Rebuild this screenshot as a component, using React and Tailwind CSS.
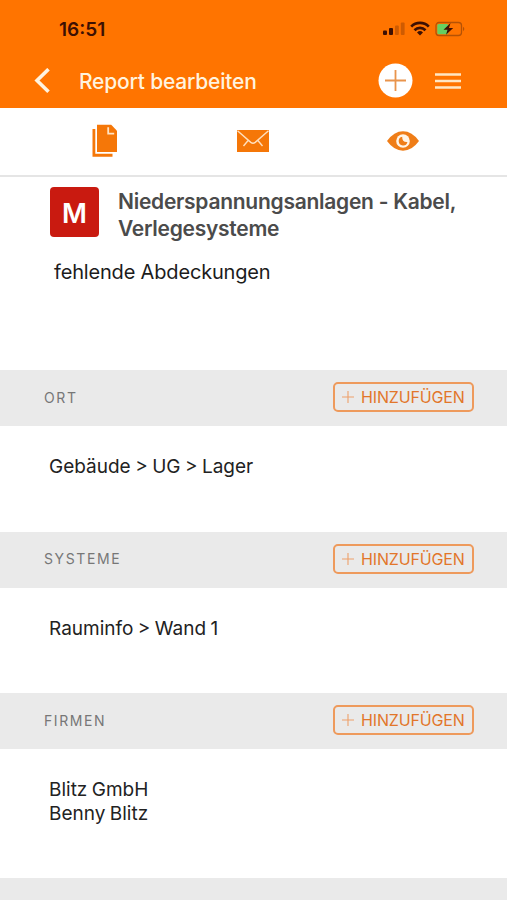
import { useState } from "react";

const sections = [
  { title: "ORT", lines: ["Gebäude > UG > Lager"], height: "h-[105.5px]" },
  { title: "SYSTEME", lines: ["Rauminfo > Wand 1"], height: "h-[105.5px]" },
  { title: "FIRMEN", lines: ["Blitz GmbH", "Benny Blitz"], height: "h-[129px]" },
];

const StatusBar = () => (
  <div className="flex h-[54px] items-start justify-between pt-[17px] pr-[41px] pl-[59px]">
    <span className="pt-[1px] text-[19px] leading-[24px] font-semibold text-[#3d1003]">16:51</span>
    <svg width="84" height="16" viewBox="0 0 84 16" className="mt-[4px]">
      <g fill="#3d1003">
        <rect x="1" y="9.5" width="4" height="4.5" rx="1" />
        <rect x="7" y="7" width="4" height="7" rx="1" />
        <rect x="13" y="4.5" width="3.8" height="9.5" rx="1" opacity=".25" />
        <rect x="18.8" y="1.5" width="3.8" height="12.5" rx="1" opacity=".25" />
      </g>
      <g fill="none" stroke="#3d1003" strokeWidth="2.7">
        <path d="M29.2 5.6a12.4 12.4 0 0 1 17.6 0" />
        <path d="M32.5 9.2a7.8 7.8 0 0 1 11 0" />
      </g>
      <path d="M35 11.5a4.4 4.4 0 0 1 6 0L38 14.6z" fill="#3d1003" />
      <rect x="54" y="1.5" width="25.5" height="13" rx="3" fill="none" stroke="#b55205" strokeWidth="1.3" />
      <rect x="55.3" y="2.9" width="11" height="10.3" rx="1.5" fill="#66cf61" />
      <path d="M81 5.8q2.6 2.2 0 4.4z" fill="#b55205" />
      <path d="M68.5 2l-7 6.7h4l-1.5 5 7.2-6.8h-4.2z" fill="#3d1003" />
    </svg>
  </div>
);

const AddButton = ({ onClick }) => (
  <button
    onClick={onClick}
    className="flex h-[30px] w-[141px] items-center rounded-[5px] border-2 border-[#ee9a5c] pl-[7px] text-[#e2762a]"
  >
    <svg width="12" height="12" viewBox="0 0 12 12" className="mr-[7px]" stroke="#eda06a" strokeWidth="1.1">
      <path d="M6 0v12M0 6h12" />
    </svg>
    <span className="text-[16px] leading-[20px] tracking-[-0.15px] whitespace-nowrap">HINZUFÜGEN</span>
  </button>
);

export default function App() {
  const [menuOpen, setMenuOpen] = useState(false);

  return (
    <div className="h-[900px] w-[507px] overflow-hidden bg-white font-['Inter',sans-serif]">
      <header className="h-[108px] bg-[#ff7400]">
        <StatusBar />
        <div className="flex h-[53px] items-center pl-[34px]">
          <button aria-label="Zurück">
            <svg width="17" height="26" viewBox="0 0 17 26" fill="none" stroke="#fff3df" strokeWidth="3.6">
              <path d="M14.5 1.2L3 12.5l11.5 11.2" />
            </svg>
          </button>
          <h1 className="ml-[28px] w-[299px] pt-[2px] text-[21px] leading-[26px] font-medium tracking-[-0.2px] text-[#fff3df]">
            Report bearbeiten
          </h1>
          <button aria-label="Neu">
            <svg width="35" height="35" viewBox="0 0 35 35">
              <circle cx="17.5" cy="17.5" r="17" fill="#fff" />
              <path d="M17.5 7v21M7 17.5h21" stroke="#e9944c" strokeWidth="1.8" />
            </svg>
          </button>
          <button aria-label="Menü" className="ml-[22px]" onClick={() => setMenuOpen(!menuOpen)}>
            <svg width="27" height="18" viewBox="0 0 27 18" stroke="#ffe6c4" strokeWidth="2.5">
              <path d="M0 2.5h26M0 9h26M0 15.5h26" />
            </svg>
          </button>
        </div>
      </header>

      <nav className="flex h-[69px] items-center border-b-2 border-[#e5e5e5] pb-[2px] pl-[92px]">
        <svg width="26" height="34" viewBox="0 0 26 34" fill="#f57708">
          <path d="M.5 5h2.8v24.8h17.2v3H.5z" />
          <path d="M5 .8h14.2L25 6.8v21.3H5z" />
          <path d="M16.2 3.3v6.4h6" fill="none" stroke="#ffe3c4" strokeWidth="1.8" />
        </svg>
        <svg width="32" height="22" viewBox="0 0 32 22" className="ml-[119px]">
          <path d="M0 0h32v22H0z" fill="#f57708" />
          <path d="M.5.8L13.8 12.4q2.2 1.8 4.4 0L31.5.8M11.3 10.3L6.5 16M20.7 10.3l4.8 5.7" fill="none" stroke="#ffdfbd" strokeWidth="1.4" />
        </svg>
        <svg width="32" height="20" viewBox="0 0 32 20" className="ml-[118px]">
          <path d="M0 10Q7 .3 16 .3T32 10Q25 19.7 16 19.7T0 10z" fill="#ef7d17" />
          <circle cx="16" cy="10" r="6.8" fill="#fff4e6" />
          <path d="M15.2 5.7a4.4 4.4 0 1 0 5.2 5.2q-5.4.4-5.2-5.2z" fill="#ef7d17" />
        </svg>
      </nav>

      <div className="h-[193px] pt-[10px]">
        <div className="flex pl-[50px]">
          <div className="flex h-[50px] w-[49px] items-center justify-center rounded-[4px] bg-[#c91a10] pt-[4px] text-[27px] font-semibold text-white">
            M
          </div>
          <h2 className="ml-[19px] pt-[1px] text-[21px] leading-[27px] font-semibold tracking-[-0.27px] text-[#4b4b4b]">
            Niederspannungsanlagen - Kabel,
            <br />
            Verlegesysteme
          </h2>
        </div>
        <p className="mt-[18px] pl-[54px] text-[20px] leading-[24px] tracking-[-0.17px] text-[#1c1c1c]">
          fehlende Abdeckungen
        </p>
      </div>

      {sections.map((s) => (
        <section key={s.title}>
          <div className="flex h-[56px] items-center justify-between bg-[#eaeaea] pr-[33px] pb-[1.5px] pl-[44px]">
            <h3 className="pt-[1px] text-[14px] leading-[20px] tracking-[1.6px] text-[#777777]">{s.title}</h3>
            <AddButton />
          </div>
          <div
            className={`${s.height} pt-[29px] pl-[49px] text-[19px] leading-[24px] [word-spacing:-0.9px] text-[#222222]`}
          >
            {s.lines.map((line) => (
              <p key={line}>{line}</p>
            ))}
          </div>
        </section>
      ))}
      <div className="h-[22px] bg-[#eaeaea]" />
    </div>
  );
}
